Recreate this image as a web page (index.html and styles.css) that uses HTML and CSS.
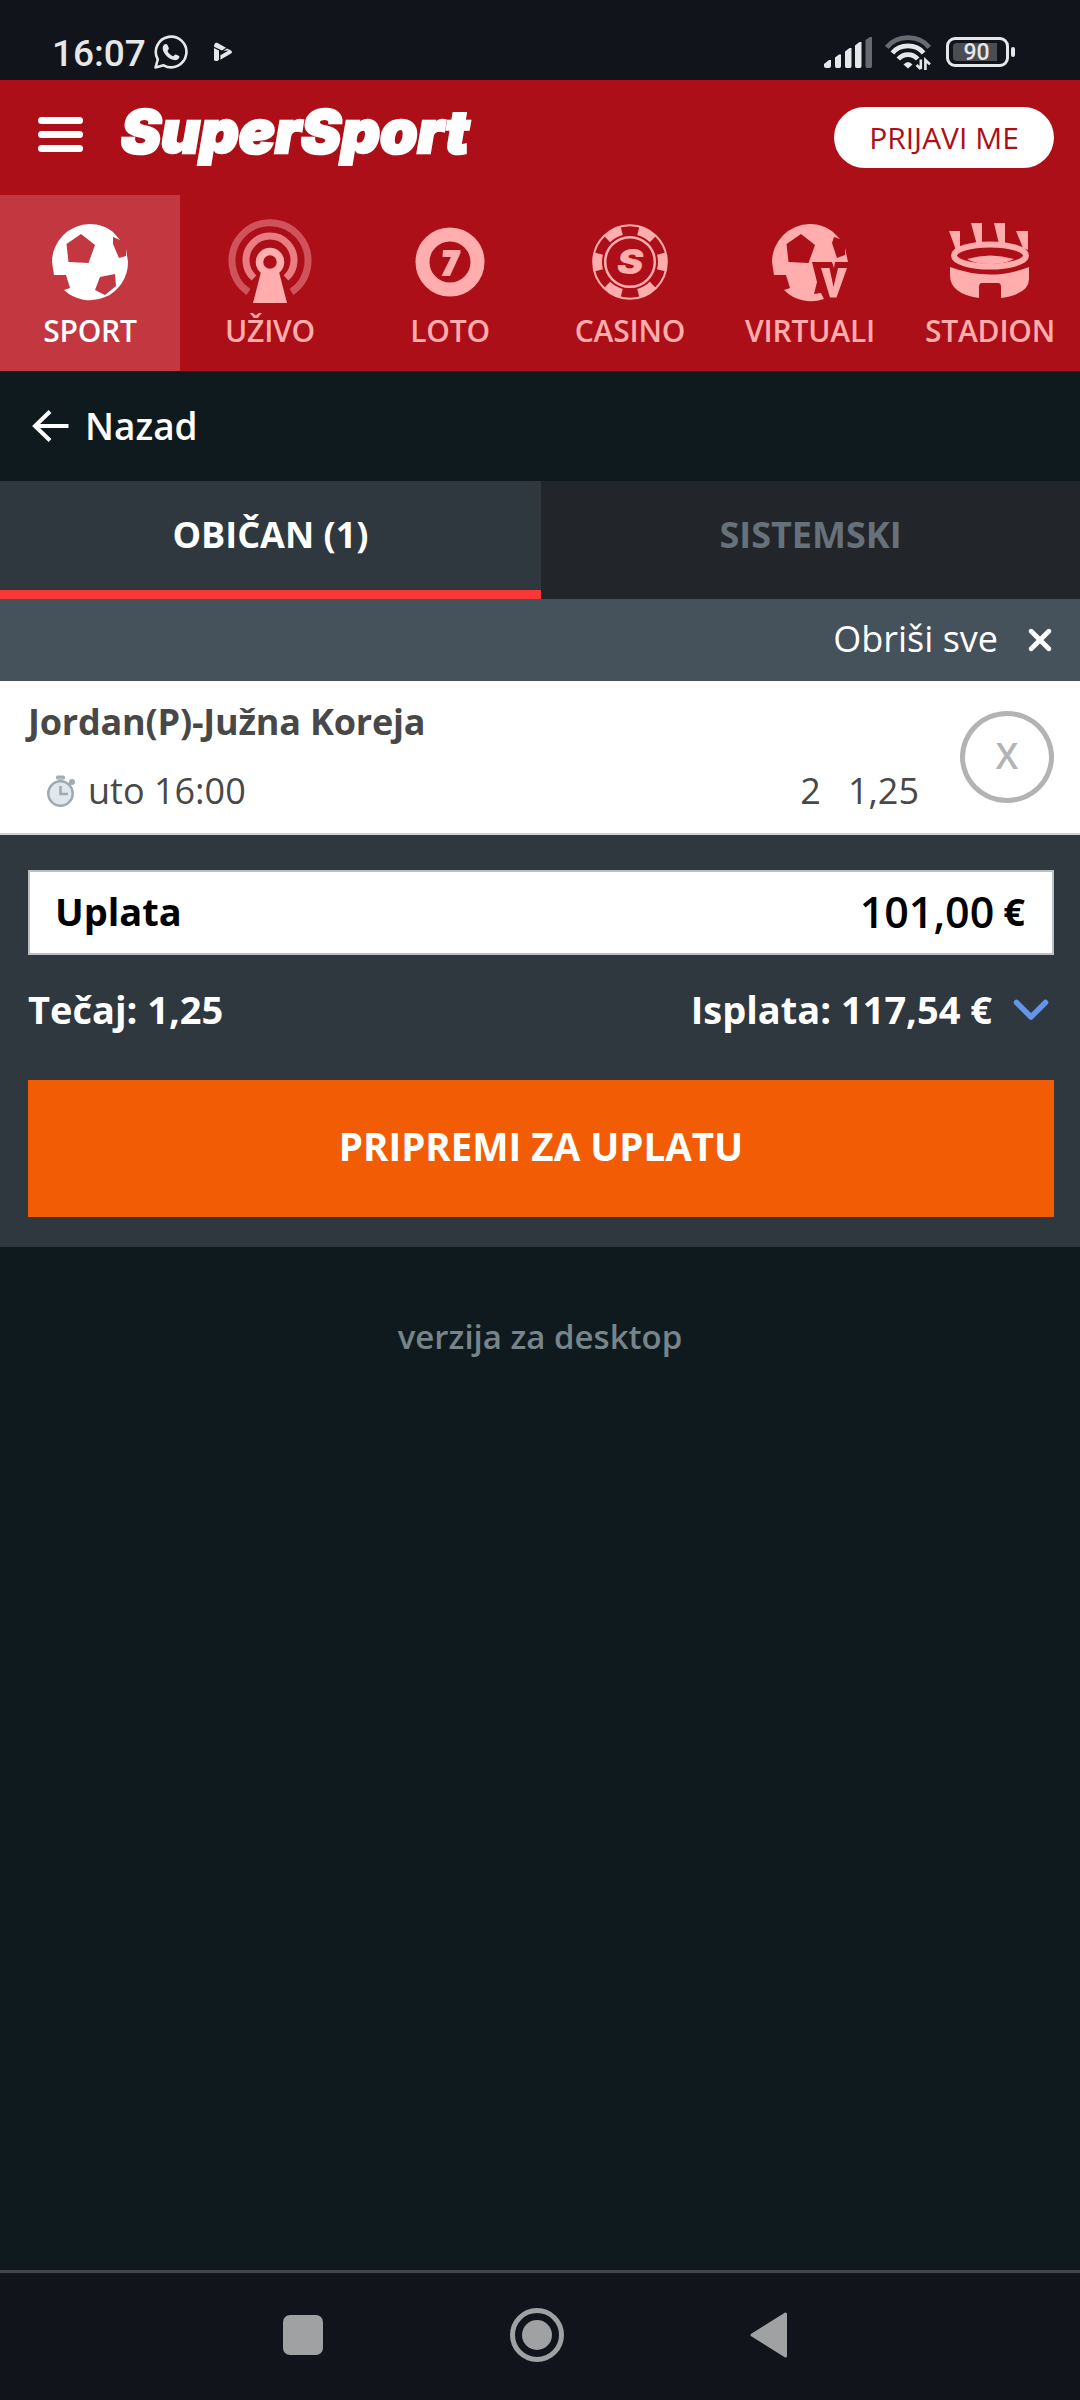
FILE: index.html
```
<!DOCTYPE html>
<html lang="hr">
<head>
<meta charset="UTF-8">
<meta name="viewport" content="width=device-width, initial-scale=1.0">
<title>SuperSport</title>
<link rel="stylesheet" href="styles.css">
</head>
<body>
<div class="status-bar">
  <span class="time">16:07</span>
  <svg class="whatsapp" width="34" height="34" viewBox="0 0 34 34" fill="none">
    <path d="M1.5 32.5 L3.8 24.5 A15.3 15.3 0 1 1 9.6 30.3 Z" stroke="#e6e7e9" stroke-width="2.6" stroke-linejoin="round"/>
    <path d="M10.3 9.6 C11.3 8.6 13 8.8 13.5 9.9 L14.8 13 C15.1 14.3 13.6 15.2 13.5 16.1 C14.4 18.4 16.6 20.4 19 21.2 C20 21.1 20.6 19.2 21.8 19.4 L25.2 21.1 C26 22.4 24.6 24.5 22.6 25 C16.5 26.3 8.4 18.6 8.7 13 C8.8 11.5 9.5 10.3 10.3 9.6 Z" fill="#e6e7e9"/>
  </svg>
  <svg class="play" width="18" height="20" viewBox="0 0 18 20">
    <path d="M0 6 L5 8.4 V17.6 C4.5 19.4 1 19.6 0 18 Z M0 4.8 C0 1 2 0 4 1.2 L12 5.8 L8 8.4 Z M13 6.4 L17 8.6 C18.6 10 18 11 17 11.6 L6.4 17.8 V13.2 L14.6 8.4 L9.4 8.8 Z" fill="#e6e7e9"/>
  </svg>
  <svg class="signal" width="48" height="31" viewBox="0 0 48 31" fill="#e6e7e9">
    <path d="M0 27 L5 23 H7 V29 Q7 31 5 31 H2 Q0 31 0 29 Z"/>
    <path d="M11 20.5 L15 17.5 H17 V29 Q17 31 15.5 31 H12.5 Q11 31 11 29 Z"/>
    <path d="M21 14.5 L25.5 11 H27.5 V29 Q27.5 31 26 31 H22.5 Q21 31 21 29 Z"/>
    <path d="M31 8.5 L35.5 5 H37.5 V29 Q37.5 31 36 31 H32.5 Q31 31 31 29 Z"/>
    <path d="M41.5 3 L46 0 H48 V29 Q48 31 46.5 31 H43 Q41.5 31 41.5 29 Z" fill="#686a70"/>
  </svg>
  <svg class="wifi" width="46" height="36" viewBox="0 0 46 36" fill="none" stroke-width="4.8">
    <path d="M1.8 12.4 C12 -.6 34 -.6 44.2 12.4" stroke="#686a70"/>
    <path d="M7.4 18 C15 8.6 31 8.6 38.6 18" stroke="#e6e7e9"/>
    <path d="M13.3 24 C18.5 18.2 27.5 18.2 32.7 24" stroke="#e6e7e9"/>
    <path d="M18.5 29.5 Q23 24.5 27.5 29.5 L23 33.6 Z" fill="#e6e7e9"/>
    <path d="M35.8 24.5 V34 M31.5 30 L35.8 34 M40.4 35 V25 L45 29.4" stroke="#e6e7e9" stroke-width="2.6"/>
  </svg>
  <div class="battery"><div class="level">90</div></div>
</div>

<header class="header">
  <div class="hamburger"><span></span><span></span><span></span></div>
  <svg class="logo" width="372" height="96" viewBox="-6 -16 372 96">
    <text x="4" y="46" textLength="348" lengthAdjust="spacingAndGlyphs">SuperSport</text>
  </svg>
  <button class="login">PRIJAVI ME</button>
</header>

<nav class="nav">
  <a class="nav-item active">
    <svg width="84" height="86" viewBox="0 0 84 86">
      <path fill="currentColor" fill-rule="evenodd" d="M42 5 C51 5 59 8 65 13 L72 21 L65 18 L65 25 L71 39 L78 37 L78 30 L80 43 A38 38 0 0 1 16 71 L22 69 L18 56 H6 L4 43 A38 38 0 0 1 42 5 Z M33 15 L18.500 25 L20.500 43 L40.500 44 L47 26 Z M67 55 L52 58 L47 71 L57 76 L68 67 Z"/>
    </svg>
    <span>SPORT</span>
  </a>
  <a class="nav-item">
    <svg width="84" height="86" viewBox="0 0 84 86" fill="none">
      <path d="M20.500 73 A38 38 0 1 1 63.500 73" stroke="#d0535b" stroke-width="7"/>
      <path d="M26 59 A24 24 0 1 1 58 59" stroke="#e87d82" stroke-width="7"/>
      <circle cx="42" cy="43" r="10.500" stroke="currentColor" stroke-width="7.500"/>
      <path d="M33 53 Q42 59 51 53 L59 84 H25 Z" fill="currentColor"/>
    </svg>
    <span>UŽIVO</span>
  </a>
  <a class="nav-item">
    <svg width="84" height="86" viewBox="0 0 84 86">
      <circle cx="42" cy="43" r="27.500" fill="none" stroke="currentColor" stroke-width="14"/>
      <path d="M35 31 H52.500 V34 L42 57 H33.500 L43 38 H34.500 Z" fill="currentColor"/>
    </svg>
    <span>LOTO</span>
  </a>
  <a class="nav-item">
    <svg width="84" height="86" viewBox="0 0 84 86" fill="none">
      <circle cx="42" cy="43" r="36.800" stroke="currentColor" stroke-width="2"/>
      <circle cx="42" cy="43" r="32.500" stroke="currentColor" stroke-width="9" pathLength="360" stroke-dasharray="30 30" stroke-dashoffset="15"/>
      <circle cx="42" cy="43" r="24.800" stroke="currentColor" stroke-width="2.500"/>
      <text class="chip-letter" x="42" y="55" text-anchor="middle" textLength="26" lengthAdjust="spacingAndGlyphs">S</text>
    </svg>
    <span>CASINO</span>
  </a>
  <a class="nav-item">
    <svg width="84" height="86" viewBox="0 0 84 86">
      <path fill="currentColor" fill-rule="evenodd" d="M42 5 C51 5 59 8 65 13 L72 20 L66 18 L64 24 L69 39 L77 36 L77 29 L80 43 H67 L66 49 L64 43 H44 L49 63 L46 75 L53 74 L56 80 A38 38 0 0 1 16 71 L22 69 L18 56 H6 L4 43 A38 38 0 0 1 42 5 Z M33 15 L18.500 25 L20.500 43 L40.500 44 L47 26 Z"/>
      <path fill="currentColor" d="M53 49 H61.500 L65.500 68 L70 49 H79 L68.500 78.500 H62 Z"/>
    </svg>
    <span>VIRTUALI</span>
  </a>
  <a class="nav-item">
    <svg width="84" height="86" viewBox="0 0 84 86" fill="none">
      <path fill="currentColor" d="M1 12 H12 V30 L8 31 Z M23 4 H34 V25 L29 26 Z M46 4 H57 V26 L51 25 Z M68 12 H80 V31 L75 29 Z"/>
      <ellipse cx="42" cy="36.500" rx="36" ry="11" stroke="currentColor" stroke-width="6"/>
      <path fill="currentColor" d="M19 40 Q42 33 66 40 Q58 45 42 45 Q27 45 19 40 Z"/>
      <path fill="currentColor" d="M2 48 Q42 63 81 48 V60 Q81 75 53 79 V68 Q53 64 50 64 H34 Q31 64 31 68 V79 Q2 75 2 56 Z"/>
    </svg>
    <span>STADION</span>
  </a>
</nav>

<main class="content">
  <a class="back">
    <svg width="37" height="32" viewBox="0 0 37 32" fill="none" stroke="#fff" stroke-width="4">
      <path d="M36.500 16 H3 M18 1.500 L3 16 L18 30.500"/>
    </svg>
    <span>Nazad</span>
  </a>

  <div class="tabs">
    <div class="tab selected">OBIČAN (1)</div>
    <div class="tab">SISTEMSKI</div>
  </div>

  <div class="clear-all">
    <span>Obriši sve</span>
    <svg width="24" height="24" viewBox="0 0 24 24" stroke="#fff" stroke-width="4.800" stroke-linecap="round">
      <path d="M3.200 3.200 L20.800 20.800 M20.800 3.200 L3.200 20.800"/>
    </svg>
  </div>

  <div class="bet">
    <div class="bet-info">
      <div class="match">Jordan(P)-Južna Koreja</div>
      <div class="bet-row">
        <svg width="30" height="32" viewBox="0 0 30 32">
          <rect x="10" y="0.500" width="9" height="4" rx="1.500" fill="#9fabb1"/>
          <rect x="12" y="3" width="5" height="5" fill="#b4bfc5"/>
          <circle cx="26" cy="7" r="3" fill="#9fabb1"/>
          <path d="M22 11 L26 7" stroke="#9fabb1" stroke-width="2"/>
          <circle cx="14.500" cy="18.500" r="12.200" fill="#e1e8ed" stroke="#9fabb1" stroke-width="2.600"/>
          <path d="M14.500 11 V19 H22" fill="none" stroke="#9fabb1" stroke-width="2.600"/>
        </svg>
        <span class="when">uto 16:00</span>
        <span class="pick">2</span>
        <span class="odd">1,25</span>
      </div>
    </div>
    <button class="remove">X</button>
  </div>

  <div class="payment">
    <div class="stake">
      <span class="stake-label">Uplata</span>
      <span class="stake-value">101,00</span>
      <span class="currency">€</span>
    </div>
    <div class="summary">
      <span>Tečaj: 1,25</span>
      <span class="payout">Isplata: 117,54 €</span>
      <svg width="36" height="22" viewBox="0 0 36 22" fill="none" stroke="#6495ed" stroke-width="5.500" stroke-linecap="round" stroke-linejoin="round">
        <path d="M3.500 3.500 L18 18 L32.500 3.500"/>
      </svg>
    </div>
    <button class="submit">PRIPREMI ZA UPLATU</button>
  </div>

  <a class="desktop-link">verzija za desktop</a>
</main>

<div class="system-nav">
  <svg width="40" height="40" viewBox="0 0 40 40"><rect width="40" height="40" rx="7" fill="#a0a1a3"/></svg>
  <svg width="54" height="54" viewBox="0 0 54 54">
    <circle cx="27" cy="27" r="24.500" fill="none" stroke="#a0a1a3" stroke-width="5"/>
    <circle cx="27" cy="27" r="15" fill="#a0a1a3"/>
  </svg>
  <svg width="38" height="46" viewBox="0 0 38 46"><path d="M35.500 2 V44 L2 23 Z" fill="#a0a1a3" stroke="#a0a1a3" stroke-width="3" stroke-linejoin="round"/></svg>
</div>
</body>
</html>
```
FILE: styles.css
```
* {
  box-sizing: border-box;
}

body {
  display: flex;
  flex-direction: column;
  width: 1080px;
  height: 2400px;
  margin: 0;
  background-color: #0f1a1e;
  color: #fff;
  font-family: "Open Sans", "Noto Sans", sans-serif;
  font-size: 36px;
  line-height: 1;
}

svg {
  display: block;
  flex: none;
}

button {
  border: none;
  padding: 0;
  font-family: inherit;
  line-height: 1;
}

/* phone status bar */
.status-bar {
  display: flex;
  align-items: center;
  flex: none;
  height: 80px;
  padding: 24px 65px 0 52px;
  background-color: #11141b;
  color: #e6e7e9;
  font-family: Roboto, sans-serif;
}

.time {
  width: 102px;
  margin-top: 2px;
  font-size: 37px;
  font-weight: 500;
}

.play {
  margin-left: 26px;
}

.signal {
  margin-left: auto;
}

.wifi {
  margin-left: 13px;
  margin-top: 2px;
}

.battery {
  position: relative;
  width: 63px;
  height: 30px;
  margin-left: 15px;
  margin-right: 6px;
  padding: 3px 4px;
  border: 3px solid #e6e7e9;
  border-radius: 9px;
}

.battery::after {
  content: "";
  position: absolute;
  top: 7px;
  right: -9px;
  width: 4px;
  height: 10px;
  border-radius: 2px;
  background-color: #e6e7e9;
}

.level {
  width: 44px;
  height: 18px;
  border-radius: 4px 0 0 4px;
  background-color: #4b4d53;
  padding-left: 3px;
  text-align: center;
  font-size: 23px;
  font-weight: 500;
  line-height: 20px;
}

/* header */
.header {
  display: flex;
  align-items: center;
  flex: none;
  height: 115px;
  padding: 0 26px 0 38px;
  background-color: #ad0f19;
}

.hamburger {
  display: flex;
  flex-direction: column;
  gap: 7px;
  width: 45px;
  margin-top: -6px;
}

.hamburger span {
  height: 7px;
  border-radius: 4px;
  background-color: #fff;
}

.logo {
  margin-left: 28px;
  margin-top: 2px;
}

.logo text {
  font-family: Inter, sans-serif;
  font-size: 59px;
  font-style: italic;
  font-weight: 900;
  fill: #fff;
  stroke: #fff;
  stroke-width: 2.6px;
}

.login {
  width: 220px;
  height: 61px;
  margin-left: auto;
  border-radius: 31px;
  background-color: #fff;
  color: #ad0f19;
  font-size: 30px;
}

/* main navigation */
.nav {
  display: grid;
  grid-template-columns: repeat(6, 1fr);
  flex: none;
  height: 176px;
  background-color: #ad0f19;
}

.nav-item {
  display: flex;
  flex-direction: column;
  align-items: center;
  padding-top: 24px;
  color: #ffadad;
  font-size: 30px;
  font-weight: 600;
  letter-spacing: -0.2px;
  white-space: nowrap;
}

.nav-item.active {
  background-color: #c33740;
  color: #fff;
}

.nav-item span {
  margin-top: 11px;
}

.chip-letter {
  font-family: Inter, sans-serif;
  font-size: 34px;
  font-style: italic;
  font-weight: 900;
  fill: currentColor;
}

/* bet slip */
.content {
  display: flex;
  flex-direction: column;
  flex: 1;
}

.back {
  display: flex;
  align-items: center;
  gap: 16px;
  height: 110px;
  padding-left: 32px;
  font-size: 37px;
  font-weight: 600;
}

.back span {
  margin-top: -2px;
}

.tabs {
  display: grid;
  grid-template-columns: 541px 1fr;
  height: 118px;
}

.tab {
  border-bottom: 9px solid #22262a;
  background-color: #22262a;
  color: #66717a;
  font-weight: 700;
  line-height: 108px;
  text-align: center;
}

.tab.selected {
  border-bottom-color: #fa3737;
  background-color: #2e383e;
  color: #fff;
}

.clear-all {
  display: flex;
  align-items: center;
  justify-content: flex-end;
  gap: 30px;
  height: 82px;
  padding-right: 28px;
  background-color: #45515b;
}

.clear-all span {
  margin-top: -2px;
}

.bet {
  display: flex;
  height: 154px;
  padding: 0 26px 0 28px;
  border-bottom: 2px solid #ccd4d7;
  background-color: #fff;
  color: #484848;
}

.bet-info {
  flex: 1;
  padding: 23px 41px 0 0;
}

.match {
  font-weight: 700;
  letter-spacing: -0.2px;
}

.bet-row {
  display: flex;
  align-items: center;
  margin-top: 33px;
  padding-left: 18px;
}

.when {
  flex: 1;
  margin-left: 12px;
}

.pick {
  margin-right: 27px;
}

.remove {
  width: 94px;
  height: 92px;
  margin-top: 30px;
  padding-bottom: 3px;
  border: 5px solid #b3b3b3;
  border-radius: 50%;
  background-color: #fff;
  color: #b3b3b3;
  font-size: 36px;
  font-weight: 600;
}

.payment {
  height: 412px;
  padding: 35px 26px 0 28px;
  background-color: #2e383e;
  font-size: 38px;
  font-weight: 700;
}

.stake {
  display: flex;
  align-items: center;
  height: 85px;
  padding: 0 27px 3px 25px;
  border: 2px solid #bbc0c3;
  background-color: #fff;
  color: #000;
}

.stake-value {
  margin-left: auto;
  font-size: 43px;
  font-weight: 600;
}

.currency {
  margin-left: 9px;
}

.summary {
  display: flex;
  align-items: center;
  height: 125px;
  padding: 0 5px 17px 0;
}

.summary svg {
  margin-top: 2px;
}

.payout {
  margin-left: auto;
  margin-right: 21px;
}

.submit {
  width: 100%;
  height: 137px;
  padding-bottom: 4px;
  background-color: #f25c05;
  color: #fff;
  font-size: 38.5px;
  font-weight: 700;
}

.desktop-link {
  margin-top: 73px;
  color: #77858a;
  font-size: 33px;
  font-weight: 600;
  text-align: center;
}

/* phone navigation buttons */
.system-nav {
  display: flex;
  align-items: center;
  justify-content: space-between;
  flex: none;
  height: 130px;
  padding: 0 292px 3px 283px;
  border-top: 3px solid #42454e;
  background-color: #11141b;
}
```
